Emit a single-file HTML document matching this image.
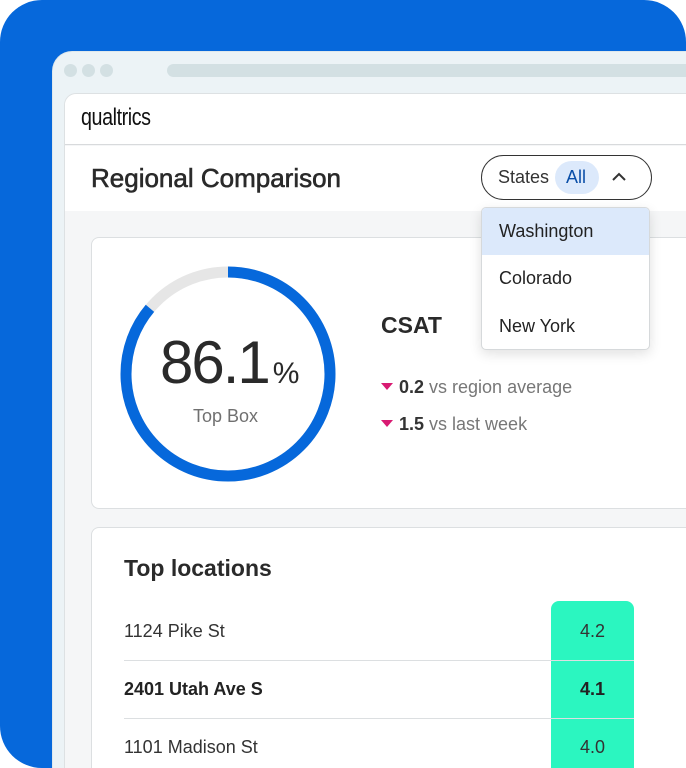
<!DOCTYPE html>
<html style="overflow:hidden;width:686px;height:768px"><head><meta charset="utf-8"><style>
*{margin:0;padding:0;box-sizing:border-box}
body{width:686px;height:768px;overflow:hidden;background:#fff;font-family:"Liberation Sans",sans-serif;position:relative}
.blue{position:absolute;left:0;top:0;width:686px;height:768px;background:#0668DB;border-radius:42px 42px 0 42px}
.win{position:absolute;left:52px;top:51px;width:634px;height:717px;background:#ecf3f6;border-radius:20px 0 0 0;border:1px solid #dfe8ec;border-right:none;border-bottom:none;overflow:hidden}
.dot{position:absolute;top:12px;width:13px;height:13px;border-radius:50%;background:#d3e0e3}
.bar{position:absolute;left:114px;top:12px;width:520px;height:13px;border-radius:7px 0 0 7px;background:#d3e0e3}
.page{position:absolute;left:64px;top:93px;width:622px;height:675px;background:#f5f6f7;border:1px solid #dde1e3;border-right:none;border-bottom:none;border-radius:12px 0 0 0;overflow:hidden}
.hdr{position:absolute;left:0;top:0;width:100%;height:51px;background:#fff;border-bottom:1px solid #d8dadc}
.logo{position:absolute;left:16px;top:10px;font-size:24px;color:#111;letter-spacing:-0.5px;transform:scaleX(0.82);transform-origin:left}
.sub{position:absolute;left:0;top:52px;width:100%;height:65px;background:#fff}
.title{position:absolute;left:26px;top:17px;font-size:26px;color:#2a2a2a}
.card{position:absolute;background:#fff;border:1px solid #dcdfe1;border-radius:8px;overflow:hidden}
.tri{display:inline-block;width:12px;height:8px;margin-right:6px;vertical-align:2px}
</style></head><body>
<div class="blue"></div>
<div class="win">
<div class="dot" style="left:11px"></div><div class="dot" style="left:29px"></div><div class="dot" style="left:47px"></div>
<div class="bar"></div>
</div>
<div class="page">
<div class="hdr"><div class="logo">qualtrics</div></div>
<div class="sub"><div class="title" style="-webkit-text-stroke:0.6px #2a2a2a">Regional Comparison</div></div>
<div class="card" style="left:26px;top:143px;width:596px;height:272px;border-right:none;border-radius:8px 0 0 8px">
<svg style="position:absolute;left:0;top:0" width="300" height="272">
<circle cx="136" cy="136" r="102" fill="none" stroke="#e6e6e6" stroke-width="11"/>
<circle cx="136" cy="136" r="102" fill="none" stroke="#0668DB" stroke-width="11" stroke-dasharray="551.8 640.9" transform="rotate(-90 136 136)"/>
</svg>
<div style="position:absolute;left:68px;top:90px;font-size:60px;color:#2a2a2a;letter-spacing:-2px">86.1<span style="font-size:30px;margin-left:4px;letter-spacing:0">%</span></div>
<div style="position:absolute;left:101px;top:168px;font-size:18px;color:#707070">Top Box</div>
<div style="position:absolute;left:289px;top:74px;font-size:23px;font-weight:bold;color:#2a2a2a">CSAT</div>
<div style="position:absolute;left:289px;top:139px;font-size:18px;color:#777"><svg class="tri" viewBox="0 0 12 8"><path d="M0 0H12L6 7Z" fill="#d81b72"/></svg><b style="color:#333">0.2</b> vs region average</div>
<div style="position:absolute;left:289px;top:176px;font-size:18px;color:#777"><svg class="tri" viewBox="0 0 12 8"><path d="M0 0H12L6 7Z" fill="#d81b72"/></svg><b style="color:#333">1.5</b> vs last week</div>
</div>
<div class="card" style="left:26px;top:433px;width:596px;height:242px;border-right:none;border-bottom:none;border-radius:8px 0 0 0">
<div style="position:absolute;left:32px;top:27px;font-size:23px;font-weight:bold;color:#2a2a2a">Top locations</div>
<div style="position:absolute;left:459px;top:73px;width:83px;height:169px;background:#2bf6c0;border-radius:8px 8px 0 0"></div>
<div style="position:absolute;left:32px;top:132px;width:510px;height:1px;background:#dcdfe1"></div>
<div style="position:absolute;left:32px;top:190px;width:510px;height:1px;background:#dcdfe1"></div>
<div style="position:absolute;left:32px;top:93px;font-size:18px;color:#333">1124 Pike St</div>
<div style="position:absolute;left:32px;top:151px;font-size:18px;color:#222;font-weight:bold">2401 Utah Ave S</div>
<div style="position:absolute;left:32px;top:209px;font-size:18px;color:#333">1101 Madison St</div>
<div style="position:absolute;left:459px;width:83px;text-align:center;top:93px;font-size:18px;color:#333">4.2</div>
<div style="position:absolute;left:459px;width:83px;text-align:center;top:151px;font-size:18px;color:#222;font-weight:bold">4.1</div>
<div style="position:absolute;left:459px;width:83px;text-align:center;top:209px;font-size:18px;color:#333">4.0</div>
</div>
</div>
<div style="position:absolute;left:481px;top:155px;width:171px;height:45px;border:1.5px solid #333;border-radius:23px;background:#fff">
<div style="position:absolute;left:16px;top:11px;font-size:18px;color:#333">States</div>
<div style="position:absolute;left:73px;top:5px;width:44px;height:33px;border-radius:17px;background:#dce9fb"></div>
<div style="position:absolute;left:84px;top:11px;font-size:18px;color:#0a4fa8">All</div>
<svg style="position:absolute;left:129px;top:14px" width="16" height="14"><path d="M2 10 L8 4 L14 10" fill="none" stroke="#333" stroke-width="2"/></svg>
</div>
<div style="position:absolute;left:481px;top:207px;width:169px;height:143px;background:#fff;border:1px solid #d6d9db;border-radius:5px;box-shadow:0 4px 12px rgba(0,0,0,0.12);overflow:hidden">
<div style="height:47px;background:#dce9fb"></div>
<div style="position:absolute;left:17px;top:13px;font-size:18px;color:#222">Washington</div>
<div style="position:absolute;left:17px;top:60px;font-size:18px;color:#222">Colorado</div>
<div style="position:absolute;left:17px;top:108px;font-size:18px;color:#222">New York</div>
</div>
</body></html>
